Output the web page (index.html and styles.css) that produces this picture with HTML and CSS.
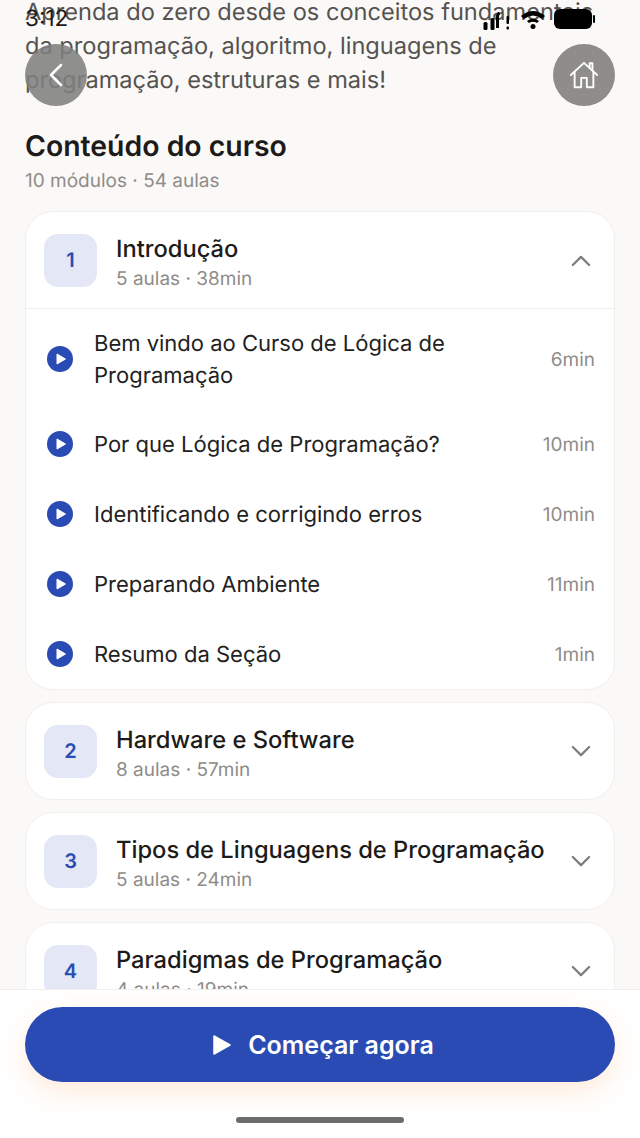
FILE: index.html
```html
<!DOCTYPE html>
<html lang="pt-BR">
<head>
    <meta charset="UTF-8">
    <meta name="viewport" content="width=device-width, initial-scale=1.0">
    <title>Conteúdo do curso</title>
    <link rel="stylesheet" href="styles.css">
</head>
<body>
    <div class="screen">
        <div class="content">
            <p class="description">Aprenda do zero desde os conceitos fundamentais da programação, algoritmo, linguagens de programação, estruturas e mais!</p>

            <h2 class="section-title">Conteúdo do curso</h2>
            <p class="section-meta">10 módulos · 54 aulas</p>

            <div class="module">
                <div class="module-header">
                    <div class="module-number">1</div>
                    <div class="module-info">
                        <div class="module-title">Introdução</div>
                        <div class="module-meta">5 aulas · 38min</div>
                    </div>
                    <svg class="chevron" viewBox="0 0 22 14"><path d="M2 12 L11 3 L20 12"/></svg>
                </div>
                <div class="lessons">
                    <div class="lesson lesson-long">
                        <svg class="play" viewBox="0 0 26 26"><circle cx="13" cy="13" r="13"/><path d="M10 8 L18.500 13 L10 18 Z"/></svg>
                        <div class="lesson-title">Bem vindo ao Curso de Lógica de Programação</div>
                        <div class="lesson-time">6min</div>
                    </div>
                    <div class="lesson">
                        <svg class="play" viewBox="0 0 26 26"><circle cx="13" cy="13" r="13"/><path d="M10 8 L18.500 13 L10 18 Z"/></svg>
                        <div class="lesson-title">Por que Lógica de Programação?</div>
                        <div class="lesson-time">10min</div>
                    </div>
                    <div class="lesson">
                        <svg class="play" viewBox="0 0 26 26"><circle cx="13" cy="13" r="13"/><path d="M10 8 L18.500 13 L10 18 Z"/></svg>
                        <div class="lesson-title">Identificando e corrigindo erros</div>
                        <div class="lesson-time">10min</div>
                    </div>
                    <div class="lesson">
                        <svg class="play" viewBox="0 0 26 26"><circle cx="13" cy="13" r="13"/><path d="M10 8 L18.500 13 L10 18 Z"/></svg>
                        <div class="lesson-title">Preparando Ambiente</div>
                        <div class="lesson-time">11min</div>
                    </div>
                    <div class="lesson">
                        <svg class="play" viewBox="0 0 26 26"><circle cx="13" cy="13" r="13"/><path d="M10 8 L18.500 13 L10 18 Z"/></svg>
                        <div class="lesson-title">Resumo da Seção</div>
                        <div class="lesson-time">1min</div>
                    </div>
                </div>
            </div>

            <div class="module">
                <div class="module-header">
                    <div class="module-number">2</div>
                    <div class="module-info">
                        <div class="module-title">Hardware e Software</div>
                        <div class="module-meta">8 aulas · 57min</div>
                    </div>
                    <svg class="chevron" viewBox="0 0 22 14"><path d="M2 2 L11 11 L20 2"/></svg>
                </div>
            </div>

            <div class="module">
                <div class="module-header">
                    <div class="module-number">3</div>
                    <div class="module-info">
                        <div class="module-title">Tipos de Linguagens de Programação</div>
                        <div class="module-meta">5 aulas · 24min</div>
                    </div>
                    <svg class="chevron" viewBox="0 0 22 14"><path d="M2 2 L11 11 L20 2"/></svg>
                </div>
            </div>

            <div class="module">
                <div class="module-header">
                    <div class="module-number">4</div>
                    <div class="module-info">
                        <div class="module-title">Paradigmas de Programação</div>
                        <div class="module-meta">4 aulas · 19min</div>
                    </div>
                    <svg class="chevron" viewBox="0 0 22 14"><path d="M2 2 L11 11 L20 2"/></svg>
                </div>
            </div>
        </div>

        <!-- Status bar and round nav buttons float over the scrolled page -->
        <div class="status-bar">
            <span class="clock">3:12</span>
            <div class="status-icons">
                <svg class="signal" viewBox="0 0 28 22"><rect x="0" y="14" width="4" height="8" rx="1.500"/><rect x="7" y="10" width="4" height="12" rx="1.500"/><path d="M14 20 V9 Q14 6 16 5" class="signal-line"/><rect x="23" y="8" width="2.500" height="8" rx="1"/><rect x="23" y="18.500" width="2.500" height="3" rx="1"/></svg>
                <svg class="wifi" viewBox="0 0 26 20"><path d="M1 7 Q13 -3 25 7 L22 10 Q13 3 4 10 Z"/><path d="M7 12 Q13 7.500 19 12 L17 14 Q13 11.500 9 14 Z"/><circle cx="13" cy="17.500" r="2.500"/></svg>
                <div class="battery"></div>
            </div>
        </div>

        <button class="round-btn back-btn">
            <svg viewBox="0 0 20 28"><path d="M15 4 L5 14 L15 24"/></svg>
        </button>
        <button class="round-btn home-btn">
            <svg viewBox="0 0 32 32"><path d="M2 16 L16 3 L30 16"/><path d="M6 13 V29 H13 V19 H19 V29 H26 V13"/><path d="M22 8 V3.500 H25 V11"/></svg>
        </button>

        <div class="bottom-bar">
            <button class="start-btn">
                <svg viewBox="0 0 20 22"><path d="M2 2 L18 11 L2 20 Z"/></svg>
                Começar agora
            </button>
            <div class="home-indicator"></div>
        </div>
    </div>
</body>
</html>
```

FILE: styles.css
```css
* {
    margin: 0;
    padding: 0;
    box-sizing: border-box;
}

body {
    font-family: Inter, 'Liberation Sans', sans-serif;
    background: #faf9f7;
    text-rendering: geometricPrecision;
}

.screen {
    position: relative;
    width: 640px;
    height: 1138px;
    overflow: hidden;
    background: #faf9f7;
}

.content {
    margin-top: -5px;
    padding: 0 25px;
}

.description {
    font-size: 23.600px;
    line-height: 34px;
    color: #55524f;
    margin-bottom: 31px;
}

.section-title {
    font-size: 28.400px;
    line-height: 36px;
    font-weight: 600;
    color: #1c1b1a;
    margin-bottom: 4px;
}

.section-meta {
    font-size: 19px;
    line-height: 26px;
    color: #8f8c88;
    margin-bottom: 17px;
}

.module {
    background: #fff;
    border: 1px solid #f1efec;
    border-radius: 28px;
    margin-bottom: 12px;
}

.module-header {
    display: flex;
    align-items: center;
    gap: 19px;
    height: 96px;
    padding: 0 23px 0 18px;
}

.module-number {
    flex: none;
    width: 53px;
    height: 53px;
    border-radius: 14px;
    background: #e3e7f6;
    color: #2a4bb3;
    display: flex;
    align-items: center;
    justify-content: center;
    font-size: 20px;
    font-weight: 600;
}

.module-info {
    flex: 1;
    padding-top: 4px;
}

.module-title {
    font-size: 23.700px;
    line-height: 32px;
    font-weight: 500;
    color: #1c1b1a;
    margin-bottom: 1px;
}

.module-meta {
    font-size: 19px;
    line-height: 26px;
    color: #8f8c88;
}

.chevron {
    flex: none;
    width: 20px;
    height: 13px;
    fill: none;
    stroke: #807e7a;
    stroke-width: 2.500;
    stroke-linecap: round;
    stroke-linejoin: round;
}

.lessons {
    border-top: 1px solid #f1efec;
}

.lesson {
    display: flex;
    align-items: center;
    padding: 19px 19px 19px 21px;
}

.lesson-long {
    padding-top: 18px;
    padding-bottom: 18px;
}

.play {
    flex: none;
    width: 26px;
    height: 26px;
    margin-right: 21px;
    fill: #2a4bb3;
}

.play path {
    fill: #fff;
    stroke: #fff;
    stroke-width: 1;
    stroke-linejoin: round;
}

.lesson-title {
    flex: 1;
    font-size: 22px;
    line-height: 32px;
    color: #222120;
    position: relative;
    top: 1px;
}

.lesson-time {
    flex: none;
    margin-left: 24px;
    font-size: 19px;
    line-height: 32px;
    color: #8f8c88;
    position: relative;
    top: 1px;
}

.status-bar {
    position: absolute;
    top: 0;
    left: 0;
    right: 0;
    height: 36px;
}

.clock {
    position: absolute;
    left: 25px;
    top: 6px;
    font-size: 22.500px;
    line-height: 26px;
    color: #1c1b1a;
}

.status-icons {
    position: absolute;
    top: 7px;
    left: 483px;
    display: flex;
    align-items: center;
    gap: 8px;
}

.signal {
    width: 29px;
    height: 22px;
    margin-top: 1px;
    fill: #000;
}

.signal-line {
    fill: none;
    stroke: #000;
    stroke-width: 3;
}

.wifi {
    width: 26px;
    height: 20px;
    fill: #000;
}

.battery {
    position: relative;
    width: 38px;
    height: 20px;
    border-radius: 6px;
    background: #000;
}

.battery::after {
    content: "";
    position: absolute;
    right: -3px;
    top: 6px;
    width: 2px;
    height: 8px;
    border-radius: 1px;
    background: #000;
}

.round-btn {
    position: absolute;
    top: 44px;
    width: 62px;
    height: 62px;
    border: none;
    border-radius: 50%;
    background: rgba(128, 128, 128, 0.88);
    display: flex;
    align-items: center;
    justify-content: center;
}

.round-btn svg {
    fill: none;
    stroke: #fff;
    stroke-linecap: round;
    stroke-linejoin: round;
}

.back-btn {
    left: 25px;
}

.back-btn svg {
    width: 20px;
    height: 28px;
    stroke-width: 2.500;
}

.home-btn {
    left: 553px;
    background: #8e8d8b;
}

.home-btn svg {
    width: 30px;
    height: 30px;
    stroke-width: 2;
}

.bottom-bar {
    position: absolute;
    left: 0;
    right: 0;
    bottom: 0;
    height: 149px;
    background: #fff;
    border-top: 1px solid #f1efec;
    padding: 17px 25px 0;
}

.start-btn {
    width: 590px;
    height: 75px;
    border: none;
    border-radius: 38px;
    background: #2a4bb3;
    color: #fff;
    font-family: inherit;
    font-size: 25px;
    font-weight: 600;
    display: flex;
    align-items: center;
    justify-content: center;
    gap: 16px;
    padding-left: 6px;
    box-shadow: 0 10px 28px rgba(255, 150, 70, 0.2);
}

.start-btn svg {
    width: 20px;
    height: 22px;
    fill: #fff;
    stroke: #fff;
    stroke-width: 1.500;
    stroke-linejoin: round;
}

.home-indicator {
    position: absolute;
    left: 236px;
    top: 127px;
    width: 168px;
    height: 6px;
    border-radius: 3px;
    background: #6b6b6b;
}
```
